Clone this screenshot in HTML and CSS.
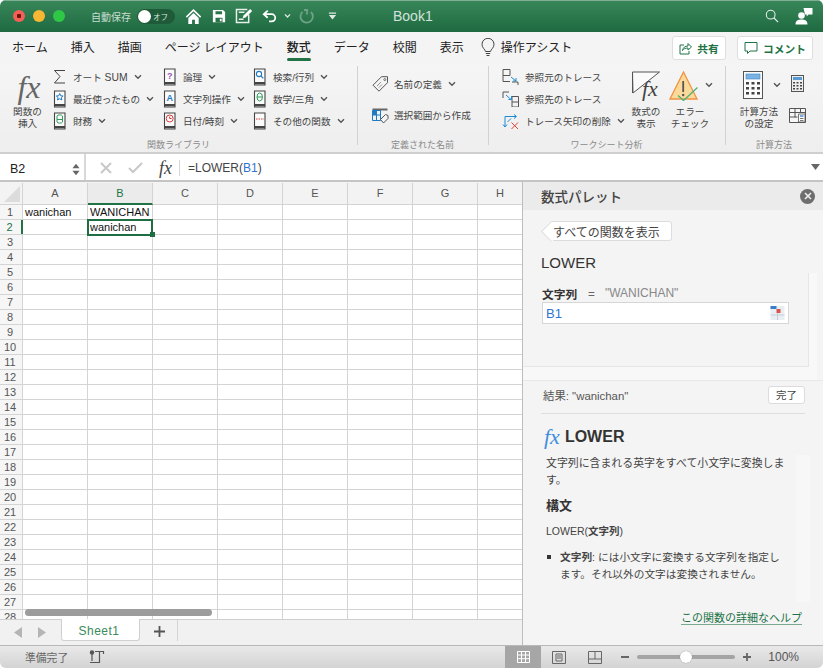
FILE: index.html
```html
<!DOCTYPE html>
<html lang="ja">
<head>
<meta charset="utf-8">
<title>Book1</title>
<link rel="stylesheet" href="styles.css">
</head>
<body>
<svg class="defs" width="0" height="0">
  <symbol id="book" viewBox="0 0 13 18"><path d="M1.5 14.5V1h10.5v16H1.5z M1.5 14.5h10.5" fill="#fbfbfb" stroke="#444" stroke-width="1.1"/><path d="M1.5 15.5h10.5" stroke="#444" stroke-width="1.6"/></symbol>
  <symbol id="chev" viewBox="0 0 8 6"><path d="M1 1.2l3 3 3-3" fill="none" stroke="#555" stroke-width="1.4"/></symbol>
</svg>
<div class="window">
  <header class="titlebar">
    <div class="lights"><span class="light red"></span><span class="light yellow"></span><span class="light green"></span></div>
    <span class="autosave">自動保存</span>
    <div class="toggle"><span class="knob"></span><span class="toggle-text">オフ</span></div>
    <div class="qat">
      <svg class="q q-home" width="17" height="17" viewBox="0 0 18 18"><path d="M9 1L0.8 9l1.2 1.2L9 3.4l7 6.8L17.2 9z M3.5 10.5V17h4v-4.5h3V17h4v-6.5L9 5.2z" fill="#fff"/></svg>
      <svg class="q q-save" width="14" height="14" viewBox="0 0 16 16"><path d="M1 1h11.5L15 3.5V15H1z" fill="#fff"/><path d="M4 2.5h7.5v3.5H4z M4 10h8v5H4z" fill="#2a7449"/><path d="M9 11h2v3H9z" fill="#fff"/></svg>
      <svg class="q q-edit" width="18" height="16" viewBox="0 0 19 17"><path d="M14.5 7v8.5h-13V1.5H13" fill="none" stroke="#e7f0ea" stroke-width="1.6"/><path d="M4 4.5h6 M4 12h5" stroke="#e7f0ea" stroke-width="1.5"/><path d="M8 11l1-3 7-7 2.2 2.2-7 7z" fill="#fff"/></svg>
      <svg class="q q-undo" width="15" height="14" viewBox="0 0 17 15"><path d="M6.5 1.5L2 5.500l4.500 4 M2 5.500h9a4 4 0 0 1 0 8H8" fill="none" stroke="#fff" stroke-width="2"/></svg>
      <svg class="q q-chev" width="7" height="6" viewBox="0 0 8 6"><path d="M1 1.2l3 3 3-3" fill="none" stroke="#dfe9e3" stroke-width="1.4"/></svg>
      <svg class="q q-redo" width="15" height="17" viewBox="0 0 15 17"><path d="M8 1.5v5 M3.5 3.8A6.2 6.2 0 1 0 12 4 M5 2h4" fill="none" stroke="#6fa287" stroke-width="1.8"/></svg>
      <svg class="q q-custom" width="9" height="10" viewBox="0 0 10 10"><path d="M1 1h8v1.400H1z M1 4h8L5 9z" fill="#dfe9e3"/></svg>
    </div>
    <span class="doc">Book1</span>
    <svg class="t-search" width="14" height="14" viewBox="0 0 16 16"><circle cx="6.5" cy="6.5" r="5" fill="none" stroke="#e7f0ea" stroke-width="1.2"/><path d="M10 10l5 5" stroke="#e7f0ea" stroke-width="1.3"/></svg>
    <svg class="t-user" width="18" height="18" viewBox="0 0 18 18"><circle cx="6.5" cy="8.5" r="3.3" fill="#fff"/><path d="M0.5 17.5c0-4 2.5-5 6-5s6 1 6 5z M8.5 1h9v6.500h-4l-1.800 2V7.500H10z" fill="#fff"/></svg>
  </header>

  <nav class="tabs">
    <span class="tab">ホーム</span>
    <span class="tab">挿入</span>
    <span class="tab">描画</span>
    <span class="tab">ページ レイアウト</span>
    <span class="tab active">数式</span>
    <span class="tab">データ</span>
    <span class="tab">校閲</span>
    <span class="tab">表示</span>
    <svg class="bulb" width="14" height="20" viewBox="0 0 14 20"><path d="M4.500 13.500C4 11 1 10 1 6.300a6 6 0 0 1 12 0c0 3.700-3 4.700-3.500 7.200z M4.800 15.500h4.400 M5.500 17.500h3" fill="none" stroke="#444" stroke-width="1"/></svg>
    <span class="tab assist">操作アシスト</span>
    <div class="tab-actions">
      <button class="action share"><svg width="13" height="13" viewBox="0 0 13 13"><path d="M5 3H1v9h9V9" fill="none" stroke="#217346" stroke-width="1"/><path d="M3.500 8.500c.5-3 2.500-4.500 5.500-4.500V1.500l3.500 3.500L9 8V6c-2.500 0-4.500.8-5.500 2.500z" fill="none" stroke="#217346" stroke-width="1"/></svg>共有</button>
      <button class="action comment"><svg width="14" height="14" viewBox="0 0 14 14"><path d="M1 1.500h12v8.500H6l-2.500 2.500V10H1z" fill="none" stroke="#217346" stroke-width="1"/></svg>コメント</button>
    </div>
  </nav>

  <section class="ribbon">
    <div class="group g-func">
      <div class="group-body">
        <div class="big b-insert"><span class="fx-big">fx</span><span class="big-label">関数の<br>挿入</span></div>
        <div class="col c1">
          <div class="item"><svg class="ic" viewBox="0 0 13 18"><path d="M12 2.500H1.500L7 8.500 1.500 15H12" fill="none" stroke="#444" stroke-width="1"/></svg><span>オート <span class="latin">SUM</span></span><svg class="chev"><use href="#chev"/></svg></div>
          <div class="item"><svg class="ic" viewBox="0 0 13 18"><use href="#book"/><path d="M6.700 3.500l1 2.300 2.400.2-1.800 1.600.6 2.400-2.200-1.300-2.200 1.300.6-2.400L3.300 6l2.400-.2z" fill="none" stroke="#1f7ac4" stroke-width="1"/></svg><span>最近使ったもの</span><svg class="chev"><use href="#chev"/></svg></div>
          <div class="item"><svg class="ic" viewBox="0 0 13 18"><use href="#book"/><path d="M4 4c0-1.500 5.500-1.500 5.500 0v6c0 1.500-5.500 1.500-5.500 0z M4 7.500h5.500" fill="none" stroke="#2f9a5a" stroke-width="1"/></svg><span>財務</span><svg class="chev"><use href="#chev"/></svg></div>
        </div>
        <div class="col c2">
          <div class="item"><svg class="ic" viewBox="0 0 13 18"><use href="#book"/><text x="6.700" y="11" class="ic-q">?</text></svg><span>論理</span><svg class="chev"><use href="#chev"/></svg></div>
          <div class="item"><svg class="ic" viewBox="0 0 13 18"><use href="#book"/><text x="6.700" y="11" class="ic-a">A</text></svg><span>文字列操作</span><svg class="chev"><use href="#chev"/></svg></div>
          <div class="item"><svg class="ic" viewBox="0 0 13 18"><use href="#book"/><circle cx="6.700" cy="6.500" r="3.500" fill="none" stroke="#d83b3b" stroke-width="1"/><path d="M6.700 4.500v2h2" fill="none" stroke="#d83b3b" stroke-width="1"/></svg><span>日付/時刻</span><svg class="chev"><use href="#chev"/></svg></div>
        </div>
        <div class="col c3">
          <div class="item"><svg class="ic" viewBox="0 0 13 18"><use href="#book"/><circle cx="6" cy="6" r="2.600" fill="none" stroke="#1f7ac4" stroke-width="1.100"/><path d="M8 8l2.300 2.300" stroke="#1f7ac4" stroke-width="1.100"/></svg><span>検索/行列</span><svg class="chev"><use href="#chev"/></svg></div>
          <div class="item"><svg class="ic" viewBox="0 0 13 18"><use href="#book"/><ellipse cx="6.700" cy="7" rx="2.700" ry="4" fill="none" stroke="#2f9a5a" stroke-width="1"/><path d="M4 7h5.400" stroke="#2f9a5a" stroke-width="1"/></svg><span>数学/三角</span><svg class="chev"><use href="#chev"/></svg></div>
          <div class="item"><svg class="ic" viewBox="0 0 13 18"><use href="#book"/><path d="M3 7h8" stroke="#d83b3b" stroke-width="1.200" stroke-dasharray="1.500 1"/></svg><span>その他の関数</span><svg class="chev"><use href="#chev"/></svg></div>
        </div>
      </div>
      <div class="group-label">関数ライブラリ</div>
    </div>

    <div class="group g-name">
      <div class="group-body">
        <div class="col c-name">
          <div class="item"><svg class="ic-wide" viewBox="0 0 17 16"><path d="M1 10L9.500 1.500H15.500V7.500L7 16z" fill="none" stroke="#555" stroke-width="1" transform="translate(0 -.8)"/><circle cx="12.800" cy="3.600" r="1" fill="none" stroke="#555" stroke-width=".8"/><path d="M5 10l4-4 M7 11.500l3-3" stroke="#777" stroke-width=".8"/></svg><span>名前の定義</span><svg class="chev"><use href="#chev"/></svg></div>
          <div class="item"><svg class="ic-wide" viewBox="0 0 17 16"><path d="M.5 1.500h15v2H.5z" fill="#666"/><path d="M.5 3.500h8v10h-8z M.5 8h8 M4.500 3.500v10" fill="none" stroke="#1f7ac4" stroke-width="1"/><path d="M1 4h3.500v4H1z" fill="#1f7ac4"/><path d="M8.500 12.500l5-5 2.500 1v3l-4.500 4.500z" fill="#f4f4f4" stroke="#555" stroke-width="1"/></svg><span>選択範囲から作成</span></div>
        </div>
      </div>
      <div class="group-label">定義された名前</div>
    </div>

    <div class="group g-audit">
      <div class="group-body">
        <div class="col c-trace">
          <div class="item"><svg class="ic-trace" viewBox="0 0 17 16"><path d="M1 1h7v6H1z M1 7v6h7" fill="none" stroke="#555" stroke-width="1" transform="translate(0 -.5)"/><path d="M10 13h6v3" fill="none" stroke="#555"/><path d="M9 8l5 4M14 9v3h-3" fill="none" stroke="#1f8ad4" stroke-width="1"/></svg><span>参照元のトレース</span></div>
          <div class="item"><svg class="ic-trace" viewBox="0 0 17 16"><path d="M1 7V1h6" fill="none" stroke="#555" stroke-width="1"/><path d="M10 5.500h6.500v5.500H10z M10 11v5h6.500v-5" fill="none" stroke="#555" stroke-width="1"/><path d="M4 4l5 4.500M9.500 5v3.500h-3" fill="none" stroke="#1f8ad4" stroke-width="1"/></svg><span>参照先のトレース</span></div>
          <div class="item"><svg class="ic-trace" viewBox="0 0 17 16"><path d="M3 14V3.500h11M12 1.500l2.500 2-2.500 2M1 11.500l2 2.500 2-2.500M5.500 9l3.500-3.500" fill="none" stroke="#1f8ad4" stroke-width="1"/><path d="M9.500 9.500l6.500 6.500M16 9.500l-6.500 6.500" stroke="#e0403a" stroke-width="1"/></svg><span>トレース矢印の削除</span><svg class="chev"><use href="#chev"/></svg></div>
        </div>
        <div class="big b-show">
          <svg class="big-ic" width="28" height="30" viewBox="0 0 28 30"><path d="M.5 1h27L1 22z M.5 1v21" fill="#fbfbfb" stroke="#555" stroke-width="1"/><text x="10" y="25" class="big-fx">fx</text></svg>
          <span class="big-label">数式の<br>表示</span>
        </div>
        <div class="big b-error">
          <div class="err-ic">
            <svg width="30" height="30" viewBox="0 0 30 30"><path d="M14.500 1L28 28H1z" fill="#fbd998" stroke="#ef9346" stroke-width="1.300"/><path d="M14.200 10v11" stroke="#555" stroke-width="1.800"/><circle cx="14.200" cy="24" r="1.200" fill="#555"/><path d="M9 24.500l5.500 5 14-13" fill="none" stroke="#4cb279" stroke-width="1.300"/></svg>
            <svg class="chev"><use href="#chev"/></svg>
          </div>
          <span class="big-label">エラー<br>チェック</span>
        </div>
      </div>
      <div class="group-label">ワークシート分析</div>
    </div>

    <div class="group g-calc">
      <div class="group-body">
        <div class="big b-calc">
          <div class="err-ic">
            <svg width="21" height="29" viewBox="0 0 21 29"><rect x=".5" y=".5" width="19" height="27" fill="#fbfbfb" stroke="#555"/><rect x="3" y="3" width="14" height="5" fill="#7bb2e2" stroke="#3d86c9" stroke-width=".6"/><path d="M3 11h3v2.500H3zM8.500 11h3v2.500h-3zM14 11h3v2.500h-3zM3 16h3v2.500H3zM8.500 16h3v2.500h-3zM14 16h3v2.500h-3zM3 21h3v2.500H3zM8.500 21h3v2.500h-3zM14 21h3v2.500h-3z" fill="#444"/></svg>
            <svg class="chev"><use href="#chev"/></svg>
          </div>
          <span class="big-label">計算方法<br>の設定</span>
        </div>
        <div class="col c-small">
          <svg width="13" height="17" viewBox="0 0 13 17"><rect x=".5" y=".5" width="12" height="16" fill="#eee" stroke="#555"/><rect x="2" y="2" width="9" height="3" fill="#5a9bd6"/><path d="M2 7h2v1.500H2zM5.500 7h2v1.500h-2zM9 7h2v1.500H9zM2 10h2v1.500H2zM5.500 10h2v1.500h-2zM9 10h2v1.500H9zM2 13h2v1.500H2zM5.500 13h2v1.500h-2zM9 13h2v1.500H9z" fill="#444"/></svg>
          <svg width="17" height="15" viewBox="0 0 17 15"><path d="M.5.500h16v14h-16z" fill="#f7f7f7" stroke="#555"/><path d="M.5 4.500h16 M.5 9h8 M6 .5v9 M11.500.5v4" stroke="#555" fill="none"/><path d="M9.500 6h6.500v8h-6.500z" fill="#fff" stroke="#555" stroke-width=".8"/><path d="M11 8h3.500" stroke="#4a90d0" stroke-width="1.500"/><path d="M11 10.500h3.500M11 12.500h3.500" stroke="#555" stroke-width=".8"/></svg>
        </div>
      </div>
      <div class="group-label">計算方法</div>
    </div>
  </section>

  <section class="formula">
    <div class="namebox"><span class="nb-text">B2</span><svg class="stepper" width="8" height="15" viewBox="0 0 9 15"><path d="M4.500 1L8.500 6H.5z M4.500 14L8.500 9H.5z" fill="#666"/></svg></div>
    <div class="fbar-tools">
      <svg width="12" height="12" viewBox="0 0 12 12"><path d="M1 1l10 10M11 1L1 11" stroke="#c8c8c8" stroke-width="2"/></svg>
      <svg width="15" height="12" viewBox="0 0 15 12"><path d="M1 6l4 4 9-9" fill="none" stroke="#c8c8c8" stroke-width="2"/></svg>
      <span class="fx-small">fx</span>
    </div>
    <div class="fbar-input">=LOWER(<span class="ref">B1</span>)</div>
    <svg class="fbar-more" width="9" height="6" viewBox="0 0 9 6"><path d="M0 0h9L4.500 6z" fill="#666"/></svg>
  </section>

  <main class="main">
    <div class="sheet">
      <div class="grid">
        <div class="col-heads">
          <div class="corner"><svg width="16" height="16" viewBox="0 0 16 16"><path d="M16 0v16H0z" fill="#dcdcdc"/></svg></div>
          <div class="ch">A</div><div class="ch sel">B</div><div class="ch">C</div><div class="ch">D</div><div class="ch">E</div><div class="ch">F</div><div class="ch">G</div><div class="ch last">H</div>
        </div>
        <div class="row"><div class="rh">1</div><div class="cell">wanichan</div><div class="cell">WANICHAN</div></div>
        <div class="row"><div class="rh sel">2</div><div class="cell"></div><div class="cell">wanichan</div></div>
        <div class="row"><div class="rh">3</div></div>
        <div class="row"><div class="rh">4</div></div>
        <div class="row"><div class="rh">5</div></div>
        <div class="row"><div class="rh">6</div></div>
        <div class="row"><div class="rh">7</div></div>
        <div class="row"><div class="rh">8</div></div>
        <div class="row"><div class="rh">9</div></div>
        <div class="row"><div class="rh">10</div></div>
        <div class="row"><div class="rh">11</div></div>
        <div class="row"><div class="rh">12</div></div>
        <div class="row"><div class="rh">13</div></div>
        <div class="row"><div class="rh">14</div></div>
        <div class="row"><div class="rh">15</div></div>
        <div class="row"><div class="rh">16</div></div>
        <div class="row"><div class="rh">17</div></div>
        <div class="row"><div class="rh">18</div></div>
        <div class="row"><div class="rh">19</div></div>
        <div class="row"><div class="rh">20</div></div>
        <div class="row"><div class="rh">21</div></div>
        <div class="row"><div class="rh">22</div></div>
        <div class="row"><div class="rh">23</div></div>
        <div class="row"><div class="rh">24</div></div>
        <div class="row"><div class="rh">25</div></div>
        <div class="row"><div class="rh">26</div></div>
        <div class="row"><div class="rh">27</div></div>
        <div class="row"><div class="rh">28</div></div>
        <div class="selection"><span class="handle"></span></div>
        <div class="hscroll"></div>
      </div>
      <div class="sheetbar">
        <svg class="nav" width="8" height="11" viewBox="0 0 8 11"><path d="M8 0v11L0 5.500z" fill="#b5b5b5"/></svg>
        <svg class="nav" width="8" height="11" viewBox="0 0 8 11"><path d="M0 0v11l8-5.500z" fill="#b5b5b5"/></svg>
        <div class="sheet-tab">Sheet1</div>
        <svg class="add" width="11" height="11" viewBox="0 0 11 11"><path d="M5.500 0v11M0 5.500h11" stroke="#555" stroke-width="1.800"/></svg>
        <span class="sheet-sep"></span>
      </div>
    </div>

    <aside class="panel">
      <div class="panel-head"><span>数式パレット</span><span class="close"><svg width="8" height="8" viewBox="0 0 8 8"><path d="M1 1l6 6M7 1L1 7" stroke="#eee" stroke-width="1.600"/></svg></span></div>
      <div class="back-row"><button class="back">すべての関数を表示</button></div>
      <h2 class="fname">LOWER</h2>
      <div class="params">
        <div class="param-inner">
          <div class="param-line"><b>文字列</b><span class="eq">=</span><span class="val">"WANICHAN"</span></div>
          <div class="param-input"><span class="ref">B1</span>
            <svg width="15" height="14" viewBox="0 0 14 14"><rect width="14" height="14" fill="#e9eef3"/><path d="M0 0h6v3H0z" fill="#3d7cc9"/><path d="M6 3h4v4H6z" fill="#d9534f"/><path d="M0 9h14M7 7v7" stroke="#c5ced8" stroke-width="1"/></svg>
          </div>
        </div>
      </div>
      <div class="result-row"><span>結果: "wanichan"</span><button class="done">完了</button></div>
      <div class="help-title"><span class="fx-blue">fx</span><span>LOWER</span></div>
      <div class="help-wrap">
        <div class="help-text">
          <p class="desc">文字列に含まれる英字をすべて小文字に変換します。</p>
          <h3>構文</h3>
          <p class="syntax">LOWER(<b>文字列</b>)</p>
          <ul><li><b>文字列</b>: には小文字に変換する文字列を指定します。それ以外の文字は変換されません。</li></ul>
        </div>
      </div>
      <div class="help-link"><a>この関数の詳細なヘルプ</a></div>
    </aside>
  </main>

  <footer class="status">
    <span class="ready">準備完了</span>
    <svg class="macro" width="16" height="14" viewBox="0 0 16 14"><circle cx="3" cy="2.500" r="2.200" fill="#555"/><path d="M3 4v7 M1 12.500h10 M6 1.500h8.500v2.500 M10.500 1.500v11" fill="none" stroke="#555" stroke-width="1.200"/></svg>
    <div class="status-right">
      <div class="view active"><svg width="13" height="12" viewBox="0 0 13 12"><path d="M.5.500h12v11H.5z M.5 4h12M.5 7.700h12M4.500.500v11M8.500.500v11" fill="none" stroke="#fff" stroke-width="1"/></svg></div>
      <div class="view"><svg width="14" height="13" viewBox="0 0 14 13"><path d="M.5.500h13v12H.5z" fill="none" stroke="#666"/><path d="M4 3h6v7H4z M5 5h4M5 7h4" fill="none" stroke="#666"/></svg></div>
      <div class="view"><svg width="14" height="13" viewBox="0 0 14 13"><path d="M.5.500h13v12H.5z M.5 8h13 M7 .5V8" fill="none" stroke="#666"/></svg></div>
      <svg class="minus" width="8" height="2" viewBox="0 0 8 2"><path d="M0 0h8v2H0z" fill="#666"/></svg>
      <div class="slider"><span class="thumb"></span></div>
      <svg class="plus" width="8" height="8" viewBox="0 0 8 8"><path d="M4 0v8M0 4h8" stroke="#666" stroke-width="1.800"/></svg>
      <span class="zoom">100%</span>
    </div>
  </footer>
</div>
</body>
</html>
```

FILE: styles.css
```css
* { box-sizing: border-box; }
html, body { margin: 0; padding: 0; background: #fff; }
body { font-family: "Liberation Sans", "Noto Sans CJK JP", sans-serif; color: #333; }
button { font: inherit; }
.defs { position: absolute; }
.window { width: 823px; height: 668px; display: flex; flex-direction: column; border-radius: 6px; overflow: hidden; background: #f3f3f3; }

.titlebar { height: 32px; flex: none; display: flex; align-items: center; background: linear-gradient(#38875a, #1f6a41); box-shadow: inset 0 1px 0 #7fae93; color: #fff; }
.lights { display: flex; gap: 8px; margin-left: 13px; }
.light { width: 12px; height: 12px; border-radius: 50%; }
.red { background: radial-gradient(circle, #6b1210 0 2px, #f45f58 2.500px); }
.yellow { background: #f8b733; }
.green { background: #2fc846; }
.autosave { margin-left: 26px; font-size: 10px; color: #c9ddd1; width: 39px; white-space: nowrap; }
.toggle { margin-left: 7px; width: 38px; height: 15px; border-radius: 8px; background: #1f5a39; display: flex; align-items: center; padding-left: 1px; }
.knob { width: 13px; height: 13px; border-radius: 50%; background: #fff; flex: none; }
.toggle-text { font-size: 7.500px; color: #d9e6de; margin-left: 2px; white-space: nowrap; }
.qat { display: flex; align-items: center; margin-left: 10px; }
.q { flex: none; }
.q-save { margin-left: 10px; }
.q-edit { margin-left: 9px; }
.q-undo { margin-left: 9px; }
.q-chev { margin-left: 7px; }
.q-redo { margin-left: 8px; }
.q-custom { margin-left: 14px; }
.doc { margin-left: 56px; font-size: 14px; color: #d3e3da; }
.t-search { margin-left: auto; }
.t-user { margin-left: 16px; margin-right: 10px; }

.tabs { height: 32px; flex: none; display: flex; align-items: center; gap: 23px; padding: 0 10px 0 12px; background: #f4f4f4; position: relative; }
.tab { font-size: 12px; font-weight: 400; color: #222; white-space: nowrap; line-height: 32px; position: relative; }
.tab.active { font-weight: 500; }
.tab.active::after { content: ""; position: absolute; left: 0; right: 0; bottom: 3px; height: 3px; border-radius: 2px; background: #217346; }
.bulb { margin-left: -6px; flex: none; }
.assist { margin-left: -17px; }
.tab-actions { margin-left: auto; display: flex; gap: 11px; }
.action { height: 24px; border: 1px solid #dedede; border-radius: 3px; background: #fff; color: #217346; font-size: 10.700px; font-weight: 700; display: flex; align-items: center; justify-content: center; gap: 5px; padding: 0; }
.share { width: 54px; }
.comment { width: 76px; }

.ribbon { height: 90px; flex: none; display: flex; padding-top: 2px; background: linear-gradient(#f5f5f5, #eeeeee); border-bottom: 2px solid #cfcfcf; }
.group { display: flex; flex-direction: column; position: relative; flex: none; }
.group + .group::before { content: ""; position: absolute; left: 0; top: 0; bottom: 7px; width: 1px; background: #d2d2d2; }
.group-body { height: 73px; display: flex; flex: none; }
.group-label { font-size: 9px; color: #8a8a8a; text-align: center; line-height: 13px; }
.g-func { width: 357px; }
.g-name { width: 131px; }
.g-audit { width: 237px; }
.g-calc { width: 98px; }
.big { display: flex; flex-direction: column; align-items: center; flex: none; }
.big-label { font-size: 9.600px; line-height: 11.500px; color: #444; text-align: center; white-space: nowrap; }
.fx-big { font-family: "Liberation Serif", serif; font-style: italic; font-size: 32px; line-height: 38px; color: #666; margin-top: 2px; padding-left: 3px; }
.b-insert { width: 41px; margin-left: 7px; }
.col { display: flex; flex-direction: column; flex: none; gap: 4px; padding-top: 2px; }
.item { height: 18px; display: flex; align-items: center; font-size: 9.600px; color: #444; white-space: nowrap; }
.latin { font-size: 10.400px; }
.ic { width: 13px; height: 18px; flex: none; margin-right: 7px; }
.chev { width: 8px; height: 6px; flex: none; margin-left: 6px; }
.c1 { margin-left: 5px; width: 110px; }
.c2 { width: 90px; }
.c3 { width: 100px; }
.ic-q, .ic-a { font-size: 9px; text-anchor: middle; font-family: "Liberation Sans", sans-serif; }
.ic-q { fill: #9b4fc0; font-weight: 700; }
.ic-a { fill: #1f7ac4; font-weight: 700; }
.ic-wide { width: 17px; height: 16px; flex: none; margin-right: 5px; }
.c-name { margin-left: 15px; gap: 13px; padding-top: 9px; }
.ic-trace { width: 17px; height: 16px; flex: none; margin-right: 6px; }
.c-trace { margin-left: 14px; width: 125px; }
.b-show { width: 38px; }
.big-ic { margin-top: 5px; margin-bottom: 5px; flex: none; }
.big-fx { font-family: "Liberation Serif", serif; font-style: italic; font-size: 22px; fill: #444; }
.b-error { width: 46px; margin-left: 2px; }
.err-ic { display: flex; align-items: flex-start; height: 35px; margin-top: 5px; margin-left: 2px; flex: none; }
.err-ic .chev { margin-left: 6px; margin-top: 11px; }
.b-calc { width: 50px; margin-left: 9px; }
.b-calc .err-ic { margin-left: 6px; }
.b-calc .err-ic .chev { margin-left: 9px; }
.c-small { margin-left: 5px; gap: 16px; padding-top: 9px; align-items: center; }

.formula { height: 28px; flex: none; display: flex; align-items: center; background: #fff; border-bottom: 2px solid #c4c4c4; }
.namebox { width: 86px; height: 26px; display: flex; align-items: center; justify-content: space-between; padding: 0 4px 0 10px; border-right: 2px solid #d8d8d8; font-size: 12.500px; color: #222; }
.nb-text { padding-top: 4px; }
.stepper { margin-top: 4px; }
.fbar-tools { display: flex; align-items: center; margin: 2px 0 0 14px; gap: 16px; width: 80px; height: 16px; border-right: 1px solid #d6d6d6; }
.fx-small { font-family: "Liberation Serif", serif; font-style: italic; font-size: 18px; color: #444; line-height: 16px; }
.fbar-input { margin-left: 8px; padding-top: 2px; font-size: 12px; color: #444; }
.ref { color: #2f74d0; }
.fbar-more { margin-left: auto; margin-right: 3px; }

.main { flex: 1; min-height: 0; display: flex; }
.sheet { width: 522px; flex: none; display: flex; flex-direction: column; background: #fff; }
.grid { flex: 1; min-height: 0; overflow: hidden; position: relative; }
.col-heads { height: 23px; display: flex; background: #f3f3f3; padding-top: 1px; border-bottom: 1px solid #d4d4d4; }
.corner { width: 23px; flex: none; display: flex; align-items: flex-end; justify-content: flex-end; padding: 0 2px 2px 0; border-right: 1px solid #d4d4d4; }
.ch { width: 65px; flex: none; border-right: 1px solid #d4d4d4; font-size: 11px; color: #555; text-align: center; line-height: 21px; }
.ch.last { flex: 1; border-right: 0; }
.ch.sel { background: #ebebeb; color: #217346; border-bottom: 2px solid #217346; height: 22px; }
.row { height: 15px; display: flex; border-bottom: 1px solid #d4d4d4; background: repeating-linear-gradient(90deg, transparent 0 64px, #d4d4d4 64px 65px) 23px 0 / 100% 100% no-repeat; }
.rh { width: 23px; flex: none; background: #f6f6f6; border-right: 1px solid #d4d4d4; font-size: 11px; line-height: 15px; color: #555; text-align: center; padding-right: 2px; }
.rh.sel { color: #217346; border-right: 2px solid #217346; }
.cell { width: 65px; flex: none; padding-left: 2px; font-size: 11px; line-height: 15px; color: #111; white-space: nowrap; overflow: hidden; }
.selection { position: absolute; left: 87px; top: 37px; width: 66px; height: 17px; border: 2px solid #1f6e43; }
.handle { position: absolute; right: -4px; bottom: -3px; width: 5px; height: 5px; background: #1f6e43; }
.hscroll { position: absolute; left: 25px; bottom: 3px; width: 187px; height: 7px; border-radius: 4px; background: #9c9c9c; }
.sheetbar { height: 26px; flex: none; display: flex; align-items: flex-start; background: #f1f1f1; border-top: 1px solid #cfcfcf; position: relative; }
.nav { margin-top: 7px; margin-left: 14px; }
.nav + .nav { margin-left: 16px; }
.sheet-tab { width: 79px; height: 22px; margin-left: 15px; margin-top: -1px; padding: 2px 3px 0 0; background: #fff; border: 1px solid #d0d0d0; border-top: 0; border-radius: 0 0 3px 3px; color: #3a8a5c; font-size: 12px; text-align: center; line-height: 20px; letter-spacing: .5px; }
.add { margin-left: 14px; margin-top: 6px; }
.sheet-sep { width: 1px; height: 21px; background: #d4d4d4; margin-left: 12px; }

.panel { flex: 1; min-width: 0; display: flex; flex-direction: column; background: #f4f4f4; border-left: 1px solid #bdbdbd; position: relative; }
.panel-head { height: 28px; flex: none; display: flex; align-items: center; justify-content: space-between; padding: 0 8px 0 18px; background: #ebebeb; font-size: 13.500px; font-weight: 500; color: #444; }
.close { width: 15px; height: 15px; border-radius: 50%; background: #6e6e6e; display: flex; align-items: center; justify-content: center; }
.back-row { height: 39px; padding: 11px 0 0 28px; flex: none; }
.back { width: 121px; height: 20px; padding: 0 0 0 2px; border: 1px solid #dcdcdc; border-left: 0; border-radius: 0 3px 3px 0; background: #fff; font-size: 12px; color: #444; position: relative; z-index: 0; text-align: left; white-space: nowrap; }
.back::before { content: ""; position: absolute; z-index: -1; left: -7px; top: 2px; width: 14px; height: 14px; background: #fff; border-left: 1px solid #dcdcdc; border-bottom: 1px solid #dcdcdc; transform: rotate(45deg); }
.fname { margin: 0; height: 24px; flex: none; padding-left: 18px; font-size: 15px; font-weight: 400; color: #333; line-height: 28px; }
.params { height: 108px; flex: none; border-bottom: 1px solid #e8e8e8; background: linear-gradient(90deg, #f8f8f8 294px, transparent 294px); padding-bottom: 13px; }
.param-inner { width: 286px; height: 94px; padding: 12px 0 0 19px; border-right: 1px solid #e6e6e6; border-bottom: 1px solid #e6e6e6; background: #f4f4f4; }
.param-line { display: flex; align-items: center; font-size: 11.700px; color: #333; height: 16px; }
.eq { margin-left: 11px; color: #666; }
.val { margin-left: 10px; color: #888; font-size: 12px; }
.param-input { width: 247px; height: 22px; margin-top: 1px; border: 1px solid #d6d6d6; background: #fff; display: flex; align-items: center; justify-content: space-between; padding: 0 3px 0 3px; font-size: 13px; }
.result-row { height: 33px; flex: none; margin: 0 18px; padding: 0 0 5px 2px; display: flex; align-items: center; justify-content: space-between; border-bottom: 1px solid #dedede; font-size: 11.400px; color: #555; }
.done { width: 37px; height: 18px; padding: 0; border: 1px solid #dcdcdc; border-radius: 3px; background: #fff; font-size: 10.500px; color: #444; }
.help-title { height: 41px; flex: none; display: flex; align-items: center; gap: 5px; padding: 5px 0 0 21px; font-size: 16px; font-weight: 700; color: #333; }
.fx-blue { font-family: "Liberation Serif", serif; font-style: italic; font-weight: 400; font-size: 22px; color: #3d8ee0; }
.help-wrap { height: 147px; flex: none; width: 287px; border-right: 14px solid #f7f7f7; position: relative; padding: 0 8px 0 23px; overflow: hidden; }
.help-text { font-size: 10.900px; line-height: 17px; color: #444; }
.desc { margin: 0; }
h3 { margin: 8px 0 0; font-size: 13px; font-weight: 700; line-height: 18px; color: #333; }
.syntax { margin: 8px 0 0; font-size: 10.500px; }
ul { margin: 9px 0 0; padding: 0 0 0 14px; list-style: none; }
li { position: relative; font-size: 10.700px; }
li::before { content: ""; position: absolute; left: -13px; top: 6px; width: 4px; height: 4px; background: #333; }
.help-link { padding: 8px 21px 0 0; text-align: right; font-size: 11px; line-height: 16px; }
.help-link a { color: #217346; border-bottom: 1px solid #7aa98f; }

.status { height: 23px; flex: none; display: flex; align-items: center; background: linear-gradient(#e9e9e9, #d3d3d3); border-top: 1px solid #b8b8b8; }
.ready { margin-left: 25px; font-size: 10.800px; color: #666; }
.macro { margin-left: 21px; }
.status-right { margin-left: auto; display: flex; align-items: center; height: 100%; }
.view { width: 36px; height: 100%; display: flex; align-items: center; justify-content: center; }
.view.active { background: #a6a6a6; }
.minus { margin-left: 8px; }
.slider { width: 98px; height: 4px; margin-left: 8px; border-radius: 2px; background: #a4a4a4; position: relative; }
.thumb { position: absolute; left: 43px; top: -4px; width: 12px; height: 12px; border-radius: 50%; background: #fff; box-shadow: 0 0 1px #777; }
.plus { margin-left: 8px; }
.zoom { margin-left: 17px; margin-right: 24px; font-size: 12px; color: #555; }
```
